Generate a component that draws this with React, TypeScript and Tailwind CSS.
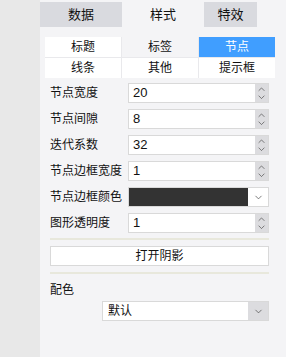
import { ChevronDown, ChevronUp } from 'lucide-react'

const font = { fontFamily: '"Liberation Sans", "Noto Sans CJK SC", sans-serif' }

function Spinner() {
  return (
    <div className="flex w-[13px] flex-col items-center justify-center bg-[#dcdcdf] text-[#444]">
      <ChevronUp size={11} strokeWidth={1.5} />
      <ChevronDown size={11} strokeWidth={1.5} className="-mt-[3px]" />
    </div>
  )
}

function NumberRow({ label, value }: { label: string; value: string }) {
  return (
    <div className="flex h-[20px] items-center">
      <span className="w-[78px] shrink-0 text-[12px] leading-none text-[#111]">{label}</span>
      <div className="flex h-[20px] w-[141px] border border-[#d9d9d9] bg-white">
        <span className="flex-1 pl-[4px] text-[13px] leading-[18px] text-[#111]">{value}</span>
        <Spinner />
      </div>
    </div>
  )
}

export default function App() {
  const subTabs = ['标题', '标签', '节点', '线条', '其他', '提示框']
  return (
    <div className="flex h-[357px] w-[286px] overflow-hidden" style={font}>
      <div className="w-[40px] shrink-0 bg-[#e8e8e8]" />
      <div className="flex flex-1 flex-col bg-[#f4f4f6]">
        {/* top tabs */}
        <div className="mt-[2px] flex h-[25px] text-[13px] text-[#111]">
          <div className="flex w-[82px] items-center justify-center bg-[#d9dadf]">数据</div>
          <div className="flex w-[82px] items-center justify-center">样式</div>
          <div className="flex w-[53px] items-center justify-center bg-[#d9dadf]">特效</div>
        </div>

        {/* sub tabs */}
        <div className="ml-[5px] mt-[10px] grid w-[230px] grid-cols-3 gap-[1px] bg-[#e9e9ec] text-[12px]">
          {subTabs.map((t, i) => (
            <div
              key={t}
              className={
                i === 2
                  ? 'flex h-[20px] items-center justify-center bg-[#409eff] text-white'
                  : i === 1
                    ? 'flex h-[20px] items-center justify-center bg-[#f4f4f6] text-[#111]'
                    : 'flex h-[20px] items-center justify-center bg-white text-[#111]'
              }
            >
              {t}
            </div>
          ))}
        </div>

        {/* form */}
        <div className="ml-[10px] mt-[5px] flex w-[219px] flex-col gap-[6px]">
          <NumberRow label="节点宽度" value="20" />
          <NumberRow label="节点间隙" value="8" />
          <NumberRow label="迭代系数" value="32" />
          <NumberRow label="节点边框宽度" value="1" />
          <div className="flex h-[20px] items-center">
            <span className="w-[78px] shrink-0 text-[12px] leading-none text-[#111]">节点边框颜色</span>
            <div className="flex h-[20px] w-[141px] border border-[#d9d9d9] bg-white">
              <div className="flex-1 bg-[#333333]" />
              <div className="flex w-[20px] items-center justify-center text-[#444]">
                <ChevronDown size={11} strokeWidth={1.5} />
              </div>
            </div>
          </div>
          <NumberRow label="图形透明度" value="1" />
        </div>

        <div className="ml-[10px] mt-[5px] h-[2px] w-[219px] bg-[#e8e8dc]" />

        <button className="ml-[10px] mt-[6px] flex h-[20px] w-[219px] items-center justify-center border border-[#d9d9d9] bg-white text-[12px] text-[#111]">
          打开阴影
        </button>

        <div className="ml-[10px] mt-[6px] h-[2px] w-[219px] bg-[#e8e8dc]" />

        <div className="ml-[10px] mt-[10px] text-[12px] leading-none text-[#111]">配色</div>

        <div className="ml-[62px] mt-[5px] flex h-[20px] w-[167px] border border-[#d9d9d9] bg-white">
          <span className="flex-1 pl-[5px] text-[12px] leading-[18px] text-[#111]">默认</span>
          <div className="flex w-[20px] items-center justify-center bg-[#dcdcdf] text-[#444]">
            <ChevronDown size={11} strokeWidth={1.5} />
          </div>
        </div>
      </div>
    </div>
  )
}
